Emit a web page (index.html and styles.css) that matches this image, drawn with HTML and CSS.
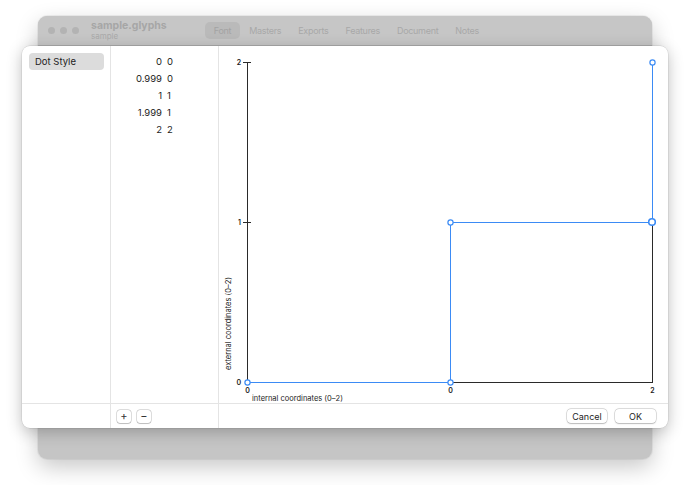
FILE: index.html
```html
<!DOCTYPE html>
<html>
<head>
<meta charset="utf-8">
<link rel="stylesheet" href="styles.css">
</head>
<body>
<div class="desktop">
  <div class="window">
    <div class="titlebar">
      <div class="lights"><span></span><span></span><span></span></div>
      <div class="doc">
        <div class="doc-name">sample.glyphs</div>
        <div class="doc-sub">sample</div>
      </div>
      <div class="tabs">
        <span class="tab sel">Font</span>
        <span class="tab">Masters</span>
        <span class="tab">Exports</span>
        <span class="tab">Features</span>
        <span class="tab">Document</span>
        <span class="tab">Notes</span>
      </div>
    </div>
  </div>

  <div class="sheet">
    <div class="side">
      <div class="side-item">Dot Style</div>
    </div>
    <div class="table">
      <div class="row"><span class="a">0</span><span class="b">0</span></div>
      <div class="row"><span class="a">0.999</span><span class="b">0</span></div>
      <div class="row"><span class="a">1</span><span class="b">1</span></div>
      <div class="row"><span class="a">1.999</span><span class="b">1</span></div>
      <div class="row"><span class="a">2</span><span class="b">2</span></div>
    </div>
    <div class="graph">
      <svg width="448" height="357" viewBox="219 46 448 357" class="plot">
        <g stroke="#2a2a2a" stroke-width="1" fill="none">
          <line x1="247.5" y1="62" x2="247.5" y2="382.5"/>
          <line x1="247" y1="382.5" x2="652.5" y2="382.5"/>
          <line x1="652.5" y1="222" x2="652.5" y2="383"/>
          <line x1="243" y1="62.5" x2="251" y2="62.5"/>
          <line x1="243" y1="222.5" x2="251" y2="222.5"/>
        </g>
        <g font-family="Inter, 'Liberation Sans', sans-serif" font-size="7" fill="#222" font-weight="600">
          <text x="241" y="65" text-anchor="end">2</text>
          <text x="241" y="225" text-anchor="end">1</text>
          <text x="241" y="385" text-anchor="end">0</text>
          <text x="247.5" y="393" text-anchor="middle">0</text>
          <text x="450.5" y="393" text-anchor="middle">0</text>
          <text x="652.5" y="393" text-anchor="middle">2</text>
        </g>
        <g font-family="Inter, 'Liberation Sans', sans-serif" font-size="7.5" fill="#222">
          <text x="252" y="401">internal coordinates (0–2)</text>
          <text transform="translate(231 370) rotate(-90)">external coordinates (0–2)</text>
        </g>
        <polyline points="247.5,382.5 450.5,382.5 450.5,222.5 652.5,222.5 652.5,62" fill="none" stroke="#3b8bf5" stroke-width="1"/>
        <g fill="#fff" stroke="#3b8bf5" stroke-width="1.2">
          <circle cx="247.5" cy="382.5" r="2.6"/>
          <circle cx="450.5" cy="382.5" r="2.6"/>
          <circle cx="450.5" cy="222.5" r="2.6"/>
          <circle cx="652.5" cy="62.5" r="2.6"/>
          <circle cx="652" cy="222" r="3.3" stroke-width="1.6"/>
        </g>
      </svg>
    </div>
    <div class="foot-side"></div>
    <div class="foot-table">
      <button class="sq">+</button>
      <button class="sq">−</button>
    </div>
    <div class="foot-graph">
      <button class="btn">Cancel</button>
      <button class="btn">OK</button>
    </div>
  </div>
</div>
</body>
</html>
```

FILE: styles.css
```css
* { box-sizing: border-box; }
html, body { margin: 0; padding: 0; background: #fff; }
body { font-family: Inter, "Liberation Sans", sans-serif; }

.desktop {
  position: relative;
  width: 690px;
  height: 485px;
  overflow: hidden;
  background: #fff;
}

.window {
  position: absolute;
  left: 38px;
  top: 16px;
  width: 614px;
  height: 443px;
  border-radius: 9px;
  background: #c5c5c5;
  box-shadow: 0 8px 22px rgba(0,0,0,0.22), 0 0 0 1px rgba(0,0,0,0.05);
}

.titlebar {
  height: 30px;
  display: flex;
  align-items: center;
  padding-left: 10px;
  background: #c6c6c6;
  border-bottom: 1px solid #b4b4b4;
  border-radius: 9px 9px 0 0;
}

.lights { display: flex; gap: 5px; }
.lights span {
  width: 7px; height: 7px; border-radius: 50%;
  background: #b3b3b3;
}

.doc { margin-left: 12px; line-height: 1; }
.doc-name { font-size: 10.5px; font-weight: 700; color: #a6a6a6; }
.doc-sub { font-size: 8px; color: #aaaaaa; margin-top: 1px; }

.tabs { display: flex; align-items: center; margin-left: 38px; gap: 0; }
.tab {
  font-size: 9px;
  letter-spacing: -0.3px;
  color: #a8a8a8;
  padding: 3px 8px;
  border-radius: 5px;
  margin-right: 1px;
}
.tab.sel { background: #bababa; color: #a3a3a3; padding: 3px 9px; }

.sheet {
  position: absolute;
  left: 22px;
  top: 46px;
  width: 646px;
  height: 382px;
  background: #fff;
  border-radius: 8px;
  box-shadow: 0 4px 16px rgba(0,0,0,0.24), 0 0 0 0.5px rgba(0,0,0,0.12);
  display: grid;
  grid-template-columns: 89px 108px 1fr;
  grid-template-rows: 1fr 25px;
  overflow: hidden;
}

.side {
  border-right: 1px solid #e4e4e4;
  padding: 7px 6px 0 7px;
}
.side-item {
  height: 17px;
  background: #dcdcdc;
  border-radius: 4px;
  font-size: 9.5px;
  line-height: 17px;
  padding-left: 6px;
  color: #1d1d1d;
}

.table {
  border-right: 1px solid #e4e4e4;
  padding-top: 7px;
  display: flex;
  flex-direction: column;
}
.row {
  height: 17px;
  display: flex;
  align-items: center;
  font-size: 9.5px;
  color: #1d1d1d;
}
.row .a { width: 51px; text-align: right; }
.row .b { margin-left: 5px; }

.graph { position: relative; }
.plot { display: block; }

.foot-side { border-top: 1px solid #e4e4e4; border-right: 1px solid #e4e4e4; }
.foot-table {
  border-top: 1px solid #e4e4e4;
  border-right: 1px solid #e4e4e4;
  display: flex;
  align-items: center;
  gap: 6px;
  padding-left: 6px;
}
.foot-graph {
  border-top: 1px solid #e4e4e4;
  display: flex;
  align-items: center;
  justify-content: flex-end;
  gap: 8px;
  padding-right: 12px;
}

.sq {
  width: 14px; height: 13px;
  padding: 0;
  border: none;
  border-radius: 3px;
  background: #fff;
  box-shadow: 0 0 0 0.5px rgba(0,0,0,0.25), 0 0.5px 1px rgba(0,0,0,0.15);
  font-family: Inter, "Liberation Sans", sans-serif;
  font-size: 11px;
  line-height: 13px;
  color: #333;
}

.btn {
  height: 14px;
  width: 40px;
  padding: 0;
  border: none;
  border-radius: 4px;
  background: #fff;
  box-shadow: 0 0 0 0.5px rgba(0,0,0,0.22), 0 0.5px 1.5px rgba(0,0,0,0.18);
  font-family: Inter, "Liberation Sans", sans-serif;
  font-size: 9px;
  color: #1d1d1d;
}
.btn + .btn { width: 41px; }
```
